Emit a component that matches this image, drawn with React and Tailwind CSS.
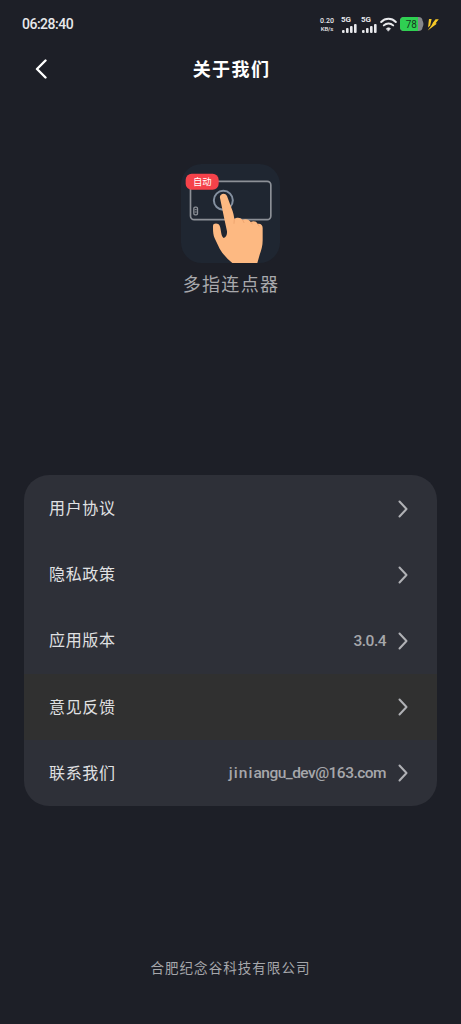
const rows = [
  { label: "用户协议" },
  { label: "隐私政策" },
  { label: "应用版本", value: "3.0.4" },
  { label: "意见反馈", active: true },
  { label: "联系我们", value: "jiniangu_dev@163.com", email: true },
];

function Signal() {
  return (
    <div className="flex w-[16px] flex-col">
      <span className="h-[8px] text-[8px] leading-[8px] font-bold tracking-[-0.2px]">5G</span>
      <svg className="ml-[1px] h-[9px] w-[15px]" viewBox="0 0 15 9" fill="currentColor">
        <rect x="0" y="6" width="2.6" height="3" rx="1" />
        <rect x="4" y="4" width="2.6" height="5" rx="1" />
        <rect x="8" y="2" width="2.6" height="7" rx="1" />
        <rect x="12" y="0" width="2.6" height="9" rx="1" />
      </svg>
    </div>
  );
}

function StatusBar() {
  return (
    <div className="flex h-[48px] items-center pl-[22px] text-[#e8e9ec]">
      <span className="text-[14px] font-medium tracking-[-0.5px]">06:28:40</span>
      <div className="ml-auto flex h-[18px] items-center pr-[22px]">
        <div className="mr-[7px] w-[14px] pt-[2px] text-center leading-[8px] font-medium whitespace-nowrap">
          <div className="text-[7px]">0.20</div>
          <div className="text-[6px] tracking-[-0.1px]">KB/s</div>
        </div>
        <Signal />
        <div className="w-[4px]" />
        <Signal />
        <svg className="ml-[3px] h-[15px] w-[17px]" viewBox="0 0 17 15" fill="none" stroke="currentColor" strokeWidth="2" strokeLinecap="round">
          <path d="M1.2 5C5.3 0.8 11.7 0.8 15.8 5" />
          <path d="M3.8 8.4C6.5 5.8 10.5 5.8 13.2 8.4" />
          <path d="M6.4 11.6C7.7 10.4 9.3 10.4 10.6 11.6L8.5 14Z" fill="currentColor" strokeWidth="0.6" />
        </svg>
        <svg className="ml-[3px] h-[14px] w-[24px]" viewBox="0 0 24 14">
          <path d="M20.5 2.5C24.4 4 24.4 10 20.5 11.5Z" fill="#85878b" />
          <rect width="22.5" height="14" rx="4" fill="#85878b" />
          <path d="M4 0H18V14H4A4 4 0 0 1 0 10V4A4 4 0 0 1 4 0Z" fill="#2fd052" />
          <text x="11.3" y="10.5" textAnchor="middle" fontSize="10" fill="#17351e">78</text>
        </svg>
        <svg className="ml-[3px] h-[13px] w-[12px]" viewBox="0 0 12 13" fill="#f6c927">
          <path d="M2 1H4.6L3.2 7.5L1 9.5Z" />
          <path d="M8.6 1.2H11.8L8.6 5.2L9.8 5.8L0.8 12.5L4.6 7.2L6 4.4Z" />
        </svg>
      </div>
    </div>
  );
}

function AppLogo() {
  return (
    <svg className="h-[99px] w-[99px]" viewBox="33 25 297 297">
      <rect x="33" y="25" width="297" height="297" rx="62" fill="#1f2631" />
      <rect x="61.5" y="77" width="241" height="115" rx="11" fill="none" stroke="#8c9097" strokeWidth="5" />
      <rect x="71.5" y="154.5" width="11" height="23" rx="4" fill="none" stroke="#8c9097" strokeWidth="4" />
      <path d="M74 162H80M74 169H80" stroke="#8c9097" strokeWidth="3" />
      <circle cx="160" cy="134" r="28.5" fill="none" stroke="#8490a0" strokeWidth="6" />
      <path
        d="M150 127C147 115 165 109 171 121L188 167C190 173 192 182 193 190C200 184 213 185 217 193C227 188 238 192 242 199C252 194 260 198 263 205C272 203 278 209 278 217V254C278 270 274 284 269 297L262 322H187C174 311 160 298 149 279L134 248C130 239 129 229 129 217V211C129 201 146 202 149 210C154 222 152 240 161 247C168 246 172 236 171 227L163 190Z"
        fill="#fdb982"
      />
      <path d="M193 190L192 203M218 193L222 201M242 199L247 205M263 205L267 211" stroke="#e99b66" strokeWidth="2" fill="none" strokeLinecap="round" />
      <rect x="47" y="54" width="99" height="48" rx="18" fill="#f5424a" />
      <text x="97" y="88" textAnchor="middle" fontSize="28" fill="#fff">自动</text>
    </svg>
  );
}

function Row({ label, value, active, email }) {
  return (
    <div className={`flex h-[66.2px] items-center pl-[25px] pr-[29px] ${active ? "bg-[#303030]" : ""}`}>
      <span className="pt-[2px] text-[16px] tracking-[0.65px] text-[#e0e1e3]">{label}</span>
      {email ? (
        <span className="ml-auto pt-[2px] text-[15.5px] font-medium text-[#a6a7ab]">
          <span className="tracking-[1.1px]">jini</span>
          <span className="tracking-[-0.53px]">angu_dev@163.com</span>
        </span>
      ) : (
        <span className="ml-auto pt-[2px] text-[15.5px] font-medium tracking-[-0.5px] text-[#a6a7ab]">{value}</span>
      )}
      <svg className="mt-[1px] ml-[12px] h-[18px] w-[10px]" viewBox="0 0 10 18" fill="none" stroke="#b0b1b5" strokeWidth="2" strokeLinecap="round" strokeLinejoin="round">
        <path d="M1.5 1.5L8.5 9L1.5 16.5" />
      </svg>
    </div>
  );
}

export default function App() {
  return (
    <div
      lang="zh-CN"
      className="flex h-[1024px] w-[461px] flex-col overflow-hidden bg-[#1d1f27] font-[Roboto,'Noto_Sans_CJK_SC',sans-serif]"
    >
      <StatusBar />
      <header className="grid h-[41px] grid-cols-[80px_1fr_80px] items-center text-white">
        <svg className="ml-[35px] h-[20px] w-[13px]" viewBox="0 0 13 20" fill="none" stroke="currentColor" strokeWidth="2.4" strokeLinecap="round" strokeLinejoin="round">
          <path d="M10.5 1.5L2 10L10.5 18.5" />
        </svg>
        <h1 className="pt-[2px] pl-[2px] text-center text-[18px] font-bold tracking-[1.4px]">关于我们</h1>
      </header>

      <section className="mt-[75px] flex flex-col items-center">
        <AppLogo />
        <p className="mt-[8px] pl-[1px] text-[18px] leading-[28px] tracking-[1.3px] text-[#a8a9ad]">多指连点器</p>
      </section>

      <div className="mx-[24px] mt-[176px] shrink-0 overflow-hidden rounded-[25px] bg-[#2e3038]">
        {rows.map((row) => (
          <Row key={row.label} {...row} />
        ))}
      </div>

      <footer className="mt-auto pb-[46px] text-center text-[13.5px] leading-[20px] tracking-[1.05px] text-[#a6a7ab]">
        合肥纪念谷科技有限公司
      </footer>
    </div>
  );
}
